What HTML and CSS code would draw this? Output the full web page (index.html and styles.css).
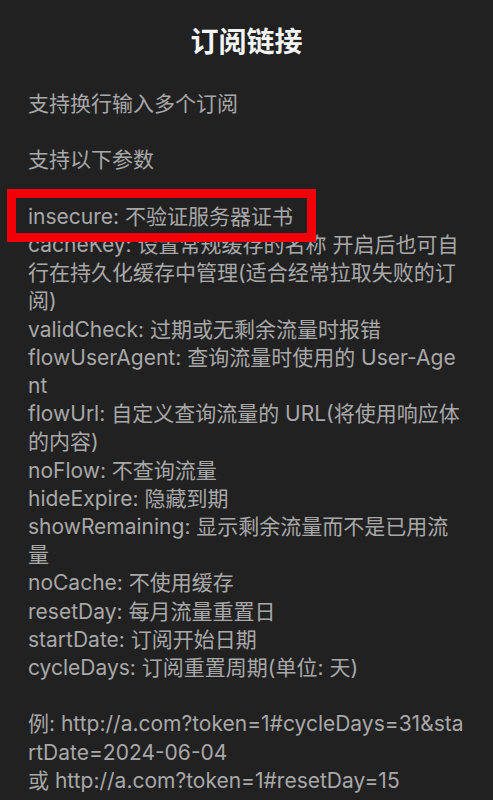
FILE: index.html
```html
<!DOCTYPE html>
<html lang="zh-CN">
<head>
<meta charset="utf-8">
<title>订阅链接</title>
<link rel="stylesheet" href="styles.css">
</head>
<body>
<div class="sheet">
  <h1 class="title">订阅链接</h1>
  <div class="content">
    <p class="para">支持换行输入多个订阅</p>
    <p class="para">支持以下参数</p>
    <div class="params">
      <div class="param highlighted">insecure: 不验证服务器证书<span class="mark"></span></div>
      <div class="param">cacheKey: 设置常规缓存的名称 开启后也可自行在持久化缓存中管理(适合经常拉取失败的订阅)</div>
      <div class="param">validCheck: 过期或无剩余流量时报错</div>
      <div class="param">flowUserAgent: 查询流量时使用的 User-Agent</div>
      <div class="param">flowUrl: 自定义查询流量的 URL(将使用响应体的内容)</div>
      <div class="param">noFlow: 不查询流量</div>
      <div class="param">hideExpire: 隐藏到期</div>
      <div class="param">showRemaining: 显示剩余流量而不是已用流量</div>
      <div class="param">noCache: 不使用缓存</div>
      <div class="param">resetDay: 每月流量重置日</div>
      <div class="param">startDate: 订阅开始日期</div>
      <div class="param">cycleDays: 订阅重置周期(单位: 天)</div>
    </div>
    <div class="examples">
      <div class="param">例: http://a.com?token=1#cycleDays=31&amp;startDate=2024-06-04</div>
      <div class="param">或 http://a.com?token=1#resetDay=15</div>
    </div>
  </div>
</div>
</body>
</html>
```
FILE: styles.css
```css
html, body {
  margin: 0;
  padding: 0;
  background: #212121;
}

.sheet {
  font-family: "Inter", "Noto Sans CJK SC", sans-serif;
}

.title {
  margin: 20px 0 0;
  text-align: center;
  color: #f4f4f4;
  font-family: "Noto Sans CJK SC", sans-serif;
  font-size: 28px;
  font-weight: 700;
  line-height: 40px;
}

.content {
  padding: 30px 28px 0;
  color: #a8a8a8;
  font-size: 21px;
  line-height: 28.2px;
  word-break: break-all;
}

.para {
  margin: 0 0 28.2px;
}

.params {
  margin-bottom: 28.2px;
}

.param {
  margin: 0;
}

.highlighted {
  position: relative;
}

.mark {
  position: absolute;
  left: -21px;
  top: -14px;
  width: 309px;
  height: 53px;
  box-sizing: border-box;
  border: 9px solid #f20008;
}
```
